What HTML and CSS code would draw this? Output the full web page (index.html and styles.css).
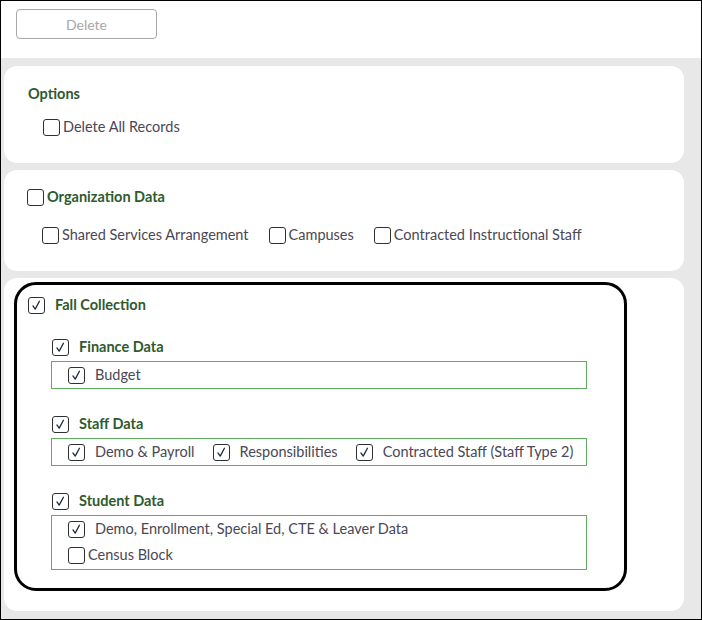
FILE: index.html
```html
<!DOCTYPE html>
<html>
<head>
<meta charset="utf-8">
<link rel="stylesheet" href="styles.css">
</head>
<body>
<div class="frame">
  <div class="toolbar">
    <button class="btn" type="button">Delete</button>
  </div>
  <div class="content">
    <section class="card card-options">
      <div class="title">Options</div>
      <div class="row indent">
        <label class="opt tight"><span class="cb"></span><span class="lbl">Delete All Records</span></label>
      </div>
    </section>

    <section class="card card-org">
      <label class="opt tight head"><span class="cb"></span><span class="title">Organization Data</span></label>
      <div class="row indent gap-row">
        <label class="opt tight"><span class="cb"></span><span class="lbl">Shared Services Arrangement</span></label>
        <label class="opt tight"><span class="cb"></span><span class="lbl">Campuses</span></label>
        <label class="opt tight"><span class="cb"></span><span class="lbl">Contracted Instructional Staff</span></label>
      </div>
    </section>

    <section class="card card-fall">
      <div class="outline">
        <label class="opt wide head"><span class="cb on"><svg viewBox="0 0 16 16"><path d="M3.6 8.6 L6.4 12.4 L11.6 2.8"/></svg></span><span class="title">Fall Collection</span></label>

        <div class="group">
          <label class="opt wide head"><span class="cb on"><svg viewBox="0 0 16 16"><path d="M3.6 8.6 L6.4 12.4 L11.6 2.8"/></svg></span><span class="title">Finance Data</span></label>
          <div class="box">
            <label class="opt wide"><span class="cb on"><svg viewBox="0 0 16 16"><path d="M3.6 8.6 L6.4 12.4 L11.6 2.8"/></svg></span><span class="lbl">Budget</span></label>
          </div>
        </div>

        <div class="group">
          <label class="opt wide head"><span class="cb on"><svg viewBox="0 0 16 16"><path d="M3.6 8.6 L6.4 12.4 L11.6 2.8"/></svg></span><span class="title">Staff Data</span></label>
          <div class="box box-row">
            <label class="opt wide"><span class="cb on"><svg viewBox="0 0 16 16"><path d="M3.6 8.6 L6.4 12.4 L11.6 2.8"/></svg></span><span class="lbl">Demo &amp; Payroll</span></label>
            <label class="opt wide"><span class="cb on"><svg viewBox="0 0 16 16"><path d="M3.6 8.6 L6.4 12.4 L11.6 2.8"/></svg></span><span class="lbl">Responsibilities</span></label>
            <label class="opt wide"><span class="cb on"><svg viewBox="0 0 16 16"><path d="M3.6 8.6 L6.4 12.4 L11.6 2.8"/></svg></span><span class="lbl">Contracted Staff (Staff Type 2)</span></label>
          </div>
        </div>

        <div class="group">
          <label class="opt wide head"><span class="cb on"><svg viewBox="0 0 16 16"><path d="M3.6 8.6 L6.4 12.4 L11.6 2.8"/></svg></span><span class="title">Student Data</span></label>
          <div class="box box-col">
            <label class="opt wide"><span class="cb on"><svg viewBox="0 0 16 16"><path d="M3.6 8.6 L6.4 12.4 L11.6 2.8"/></svg></span><span class="lbl">Demo, Enrollment, Special Ed, CTE &amp; Leaver Data</span></label>
            <label class="opt tight"><span class="cb"></span><span class="lbl">Census Block</span></label>
          </div>
        </div>
      </div>
    </section>
  </div>
</div>
</body>
</html>
```

FILE: styles.css
```css
* { box-sizing: border-box; }

html, body {
  margin: 0;
  padding: 0;
  background: #ffffff;
}

body {
  font-family: Lato, "Noto Sans", "Liberation Sans", sans-serif;
  font-size: 14.5px;
  color: #4a4756;
}

.frame {
  width: 702px;
  height: 620px;
  border: 1px solid #000;
  display: flex;
  flex-direction: column;
  background: #ffffff;
}

.toolbar {
  height: 57px;
  padding: 8px 0 0 15px;
  flex: none;
}

.btn {
  width: 141px;
  height: 30px;
  border: 1px solid #a9a9a9;
  border-radius: 4px;
  background: #ffffff;
  color: #a8a8a8;
  font-family: Lato, "Noto Sans", sans-serif;
  font-size: 14px;
  padding: 0;
}

.content {
  flex: 1;
  background: #e8e8e8;
  padding: 8px 17px 8px 3px;
  display: flex;
  flex-direction: column;
  gap: 7px;
}

.card {
  background: #ffffff;
  border-radius: 13px;
}

.card-options {
  height: 97px;
  padding: 19px 24px 0 24px;
}

.card-org {
  height: 101px;
  padding: 18px 24px 0 23px;
}

.card-fall {
  flex: 1;
  padding: 4px 57px 20px 10px;
}

.title {
  font-weight: 700;
  color: #2e5a2e;
  font-size: 14.5px;
  line-height: 18px;
}

.row {
  display: flex;
  align-items: center;
}

.indent {
  margin-left: 15px;
}

.card-options .row {
  margin-top: 15px;
}

.card-org .row {
  margin-top: 20px;
}

.gap-row {
  gap: 20px;
}

.opt {
  display: flex;
  align-items: center;
  line-height: 18px;
  white-space: nowrap;
}

.opt.tight {
  gap: 3px;
}

.opt.wide {
  gap: 10px;
}

.cb {
  width: 17px;
  height: 17px;
  border: 1.5px solid #303030;
  border-radius: 3px;
  background: #ffffff;
  flex: none;
  display: flex;
  align-items: center;
  justify-content: center;
}

.cb svg {
  width: 13px;
  height: 13px;
  fill: none;
  stroke: #1e2a3a;
  stroke-width: 1.6;
  stroke-linecap: round;
  stroke-linejoin: round;
}

.outline {
  height: 100%;
  border: 3px solid #000;
  border-radius: 22px;
  padding: 11px 10px 0 11px;
}

.group {
  margin-top: 24px;
  margin-left: 24px;
}

.group + .group {
  margin-top: 26px;
}

.group .head {
  margin-bottom: 5px;
}

.box {
  border: 1px solid #5fae5f;
  width: 536px;
  margin-left: -1px;
  padding: 4px 16px;
}

.box-row {
  display: flex;
  gap: 18px;
}

.box-col {
  display: flex;
  flex-direction: column;
  gap: 8px;
  padding-bottom: 5px;
}
```
